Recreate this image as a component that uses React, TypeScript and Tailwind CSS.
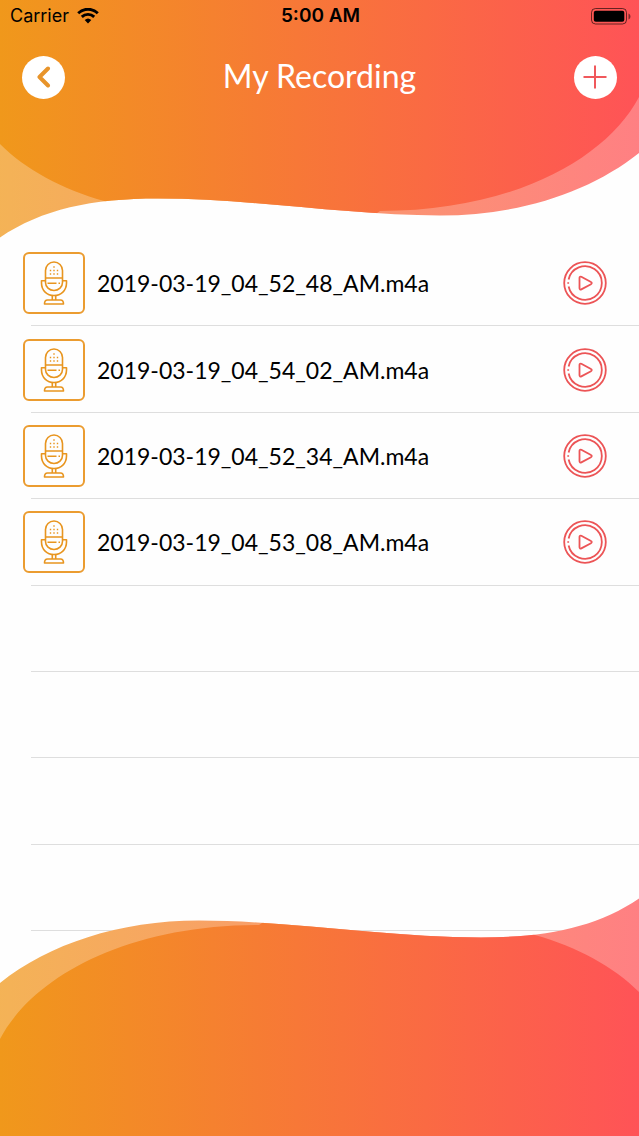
import { useState } from 'react'

type Recording = {
  id: number
  name: string
}

const recordings: Recording[] = [
  { id: 1, name: '2019-03-19_04_52_48_AM.m4a' },
  { id: 2, name: '2019-03-19_04_54_02_AM.m4a' },
  { id: 3, name: '2019-03-19_04_52_34_AM.m4a' },
  { id: 4, name: '2019-03-19_04_53_08_AM.m4a' },
]

// empty rows keep their separators, like a native table view
const emptyRows = [5, 6, 7, 8]

function Wave({ id, flipped = false }: { id: string; flipped?: boolean }) {
  return (
    <svg
      viewBox="0 0 639 238"
      preserveAspectRatio="none"
      aria-hidden="true"
      className={flipped ? 'absolute inset-0 w-full h-full rotate-180' : 'absolute inset-0 w-full h-full'}
    >
      <defs>
        <linearGradient id={id} gradientUnits="userSpaceOnUse" x1={flipped ? 639 : 0} x2={flipped ? 0 : 639} y1="0" y2="0">
          <stop offset="0" stopColor="#f0981b" />
          <stop offset="1" stopColor="#ff5357" />
        </linearGradient>
        <clipPath id={`${id}-edge`}>
          <path d="M0 0H639V153C590 192 520 215.500 440 215.500C350 215.500 250 198.500 158 198.500C92 198.500 42 209 0 237.500Z" />
        </clipPath>
      </defs>
      <g clipPath={`url(#${id}-edge)`} fill={`url(#${id})`}>
        <rect width="639" height="238" fill="#fff" />
        <rect width="639" height="238" opacity="0.74" />
        <path d="M0 0H639V97C607 158 514 211 380 211L340 238H180L104 201C62 189 26 170 0 144Z" />
      </g>
    </svg>
  )
}

function WifiIcon() {
  return (
    <svg width="22" height="16" viewBox="0 0 22 16" aria-hidden="true">
      <path d="M11 15.500L7.700 12.100a4.800 4.800 0 0 1 6.600 0Z" fill="#000" />
      <path d="M4.800 8.900a9 9 0 0 1 12.400 0M1.200 5.200a14.100 14.100 0 0 1 19.600 0" fill="none" stroke="#000" strokeWidth="2.900" />
    </svg>
  )
}

function BatteryIcon() {
  return (
    <svg width="40" height="17" viewBox="0 0 40 17" aria-hidden="true">
      <rect x="0.500" y="0.500" width="35" height="15.500" rx="4" fill="none" stroke="#000" strokeOpacity="0.600" />
      <rect x="2.800" y="2.800" width="30.500" height="11" rx="2" />
      <path d="M37.500 5.500c2.600 1 2.600 5 0 6Z" fillOpacity="0.500" />
    </svg>
  )
}

function MicIcon() {
  return (
    <svg width="28" height="44" viewBox="0 0 28 44" fill="none" stroke="#e8951f" strokeWidth="1.600" strokeLinejoin="round" aria-hidden="true">
      <path d="M5.500 17V9.500a8.500 8.500 0 0 1 17 0V17ZM5.500 17v4.500a8.500 8 0 0 0 17 0V17" />
      <path d="M5.500 19.700H1.500V22C1.500 29.500 7 34.500 14 34.500S26.500 29.500 26.500 22V19.700H22.500" />
      <path d="M12.300 34.500v4.500M15.700 34.500v4.500M4.500 43c0-2.600 1-4 3-4h13c2 0 3 1.400 3 4Z" />
      <path d="M7.500 22.300h9M18.500 22.300h1.500" strokeWidth="1.600" />
      <path d="M13.300 6h1.400M9.800 9.500h1.400M13.300 9.500h1.400M16.800 9.500h1.400M9.800 13h1.400M13.300 13h1.400M16.800 13h1.400" strokeWidth="1.400" />
    </svg>
  )
}

function PlayIcon() {
  return (
    <svg className="w-full h-full" viewBox="0 0 44 44" fill="none" stroke="#ec5456" strokeWidth="1.800" strokeLinejoin="round" aria-hidden="true">
      <circle cx="22" cy="22" r="20.800" />
      <path d="M5.600 18.500A16.800 16.800 0 1 1 5.600 25.500M5.200 21.200v1.600" />
      <path d="M16.500 16.700v10.600c0 1 .9 1.500 1.800 1.100l9.700-5.200c1-.5 1-1.700 0-2.200l-9.700-5.300c-.9-.4-1.800.1-1.800 1Z" />
    </svg>
  )
}

export default function App() {
  const [playingId, setPlayingId] = useState<number | null>(null)

  return (
    <div className="min-h-screen bg-[#fefefe] flex flex-col font-[Lato,'Noto_Sans',sans-serif]">

      {/* Header */}
      <header className="relative h-[238px]">
        <Wave id="wave-top" />

        <div className="relative">
          <div className="h-8 pl-[10px] pr-2 grid grid-cols-3 items-center text-black text-lg font-[Inter,sans-serif]">
            <div className="flex items-center gap-2">
              <span>Carrier</span>
              <WifiIcon />
            </div>
            <time className="text-center text-[19px] font-semibold">5:00 AM</time>
            <div className="flex justify-end">
              <BatteryIcon />
            </div>
          </div>

          <div className="h-[90px] px-[22px] flex items-center justify-between">
            <button aria-label="Back" className="size-[43px] rounded-full bg-white flex items-center justify-center">
              <svg width="14" height="22" viewBox="0 0 14 22" fill="none" stroke="#e8942a" strokeWidth="4" strokeLinecap="round" strokeLinejoin="round" aria-hidden="true">
                <path d="M11 2.500L2.500 11L11 19.500" />
              </svg>
            </button>
            <h1 className="text-white text-[32px] leading-10 pb-[2px]">My Recording</h1>
            <button aria-label="New recording" className="size-[43px] rounded-full bg-white flex items-center justify-center">
              <svg width="24" height="24" viewBox="0 0 24 24" stroke="#f0585c" strokeWidth="2" aria-hidden="true">
                <path d="M12 0.500V23.500M0.500 12H23.500" />
              </svg>
            </button>
          </div>
        </div>
      </header>

      {/* Recordings */}
      <ul className="flex-1 grid grid-rows-8 pt-[2px]">
        {recordings.map((item) => (
          <li key={item.id} className="relative pl-[23px] pr-8 flex items-center">
            <div className="size-[62px] rounded-md border-2 border-[#eb9c30] flex items-center justify-center">
              <MicIcon />
            </div>
            <span className="flex-1 pl-3 text-[23px] leading-8 text-black">{item.name}</span>
            <button
              aria-label={`Play ${item.name}`}
              aria-pressed={playingId === item.id}
              onClick={() => setPlayingId(playingId === item.id ? null : item.id)}
              className="size-11"
            >
              <PlayIcon />
            </button>
            <div className="absolute bottom-0 left-[31px] right-0 h-px bg-[#dedede]" />
          </li>
        ))}
        {emptyRows.map((row) => (
          <li key={row} aria-hidden="true" className="ml-[31px] min-h-20 border-b border-[#dedede]" />
        ))}
      </ul>

      {/* Footer */}
      <footer className="relative h-[238px] -mt-[33px]">
        <Wave id="wave-bottom" flipped />
      </footer>
    </div>
  )
}
